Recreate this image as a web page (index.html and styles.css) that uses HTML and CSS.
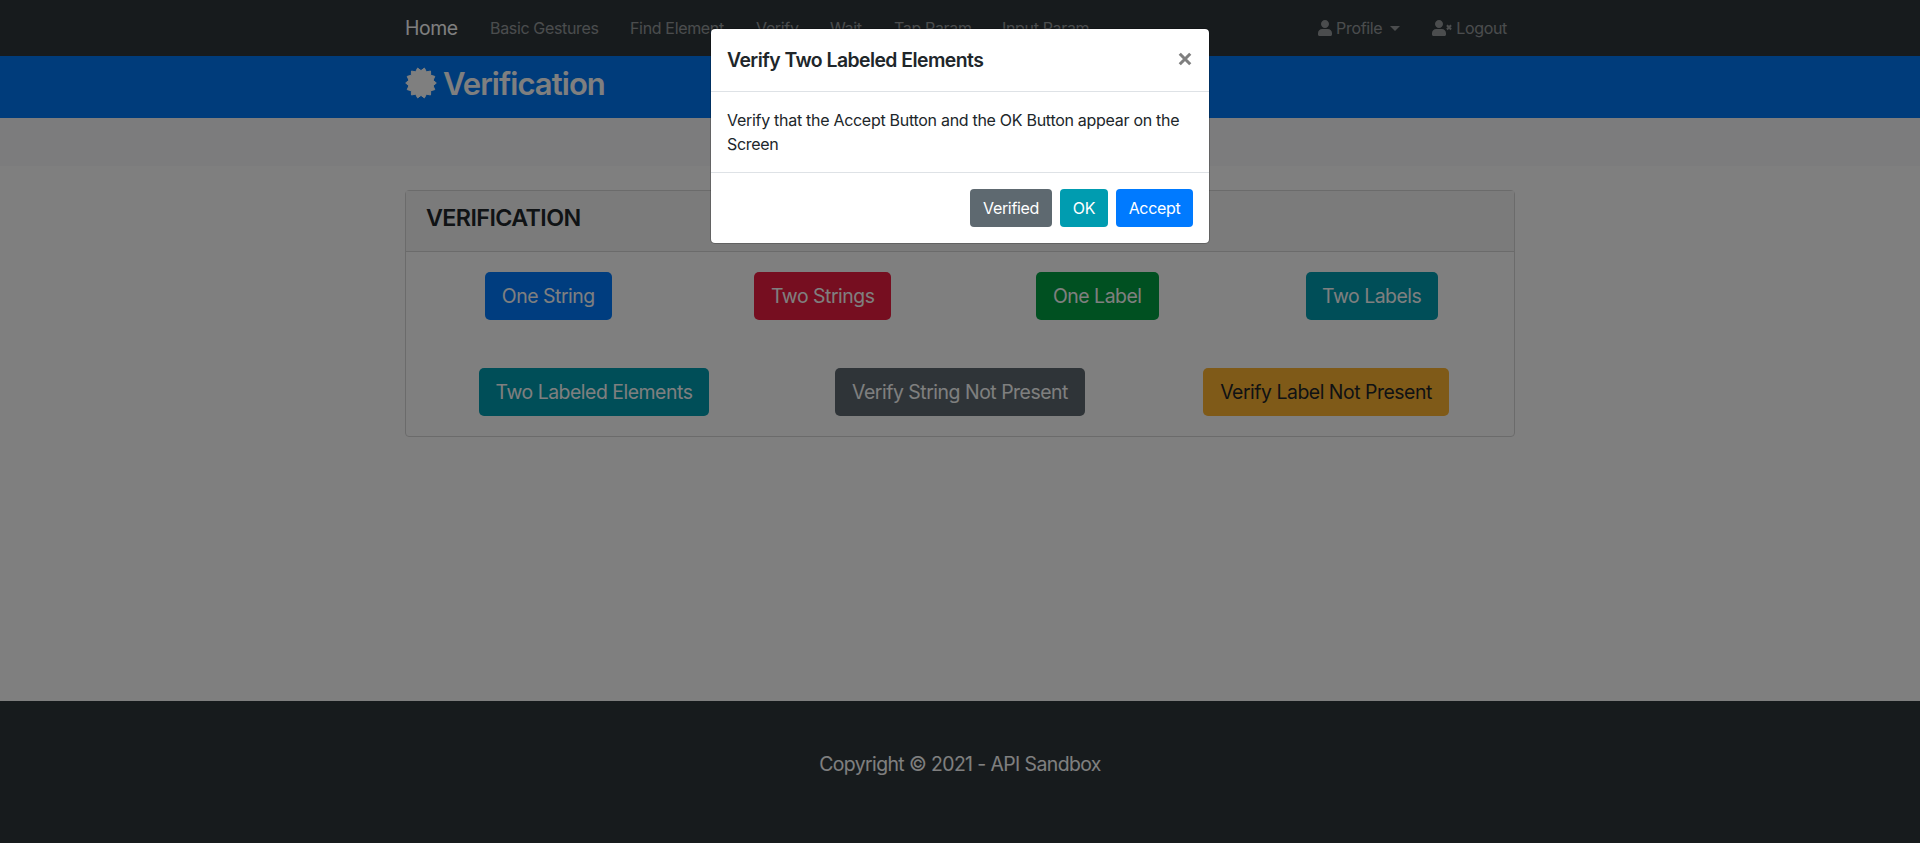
FILE: index.html
```html
<!DOCTYPE html>
<html lang="en">
<head>
<meta charset="utf-8">
<title>Verification</title>
<link rel="stylesheet" href="styles.css">
</head>
<body>
<nav class="navbar"><div class="container nav-inner">
  <a class="brand">Home</a>
  <a class="nav-link w-basic">Basic Gestures</a><a class="nav-link w-find">Find Element</a><a class="nav-link w-verify">Verify</a><a class="nav-link w-wait">Wait</a><a class="nav-link w-tap">Tap Param</a><a class="nav-link w-input">Input Param</a>
  <div class="nav-right">
    <a class="nav-link"><svg class="user" viewBox="0 0 448 512"><path d="M224 256c70.700 0 128-57.300 128-128S294.700 0 224 0 96 57.300 96 128s57.300 128 128 128zm90 32H134C60 288 0 348 0 422v42c0 26 22 48 48 48h352c26 0 48-22 48-48v-42c0-74-60-134-134-134z"/></svg><span>Profile</span><i class="caret"></i></a>
    <a class="nav-link"><svg class="user-x" viewBox="0 0 640 512"><path d="M224 256c70.700 0 128-57.300 128-128S294.700 0 224 0 96 57.300 96 128s57.300 128 128 128zm90 32H134C60 288 0 348 0 422v42c0 26 22 48 48 48h352c26 0 48-22 48-48v-42c0-74-60-134-134-134z"/><path class="cross" d="M478 170l132 132M610 170L478 302"/></svg><span>Logout</span></a>
  </div>
</div></nav>
<header class="page-header"><div class="container header-inner">
  <svg class="seal" viewBox="-16 -16 32 32"><path d="M0-12.400L3.410-14.920 5.380-11.170 9.540-11.960 9.690-7.730 13.790-6.640 12.090-2.760 15.300 0 12.090 2.760 13.790 6.640 9.690 7.730 9.540 11.960 5.380 11.170 3.410 14.920 0 12.400-3.410 14.920-5.380 11.170-9.540 11.960-9.690 7.730-13.790 6.640-12.090 2.760-15.300 0-12.090-2.760-13.790-6.640-9.690-7.730-9.540-11.960-5.380-11.170-3.410-14.920z"/></svg>
  <h1>Verification</h1>
</div></header>
<section class="actions"></section>
<main class="container">
  <section class="card">
    <div class="card-header"><h2>VERIFICATION</h2></div>
    <div class="card-body">
      <div class="row four">
        <button class="btn lg primary b1">One String</button><button class="btn lg danger b2">Two Strings</button><button class="btn lg success b3">One Label</button><button class="btn lg info b4">Two Labels</button>
      </div>
      <div class="row three">
        <button class="btn lg info b5">Two Labeled Elements</button><button class="btn lg secondary b6">Verify String Not Present</button><button class="btn lg warning b7">Verify Label Not Present</button>
      </div>
    </div>
  </section>
</main>
<footer class="footer"><p>Copyright © 2021 - API Sandbox</p></footer>
<div class="backdrop">
  <div class="modal">
    <div class="modal-header"><h3>Verify Two Labeled Elements</h3><svg class="close" viewBox="0 0 12 12"><path d="M1.500 1.500l9 9M10.500 1.500l-9 9"/></svg></div>
    <div class="modal-body">Verify that the Accept Button and the OK Button appear on the<br>Screen</div>
    <div class="modal-footer"><button class="btn secondary m1">Verified</button><button class="btn info m2">OK</button><button class="btn primary m3">Accept</button></div>
  </div>
</div>
</body>
</html>
```
FILE: styles.css
```css
* { box-sizing: border-box; }
body { margin: 0; height: 843px; overflow: hidden; display: flex; flex-direction: column; background: #fff; color: #20262a; font: 400 16px/24px Inter, "Liberation Sans", sans-serif; letter-spacing: -0.34px; }
h1, h2, h3, p { margin: 0; font-weight: 600; }
.container { width: 1110px; margin: 0 auto; }
.navbar { height: 56px; background: #2e363a; }
.nav-inner { height: 56px; display: flex; align-items: center; }
.brand { width: 85px; color: #fff; font-size: 19.4px; letter-spacing: -0.4px; }
.nav-link { display: flex; align-items: center; color: rgba(255,255,255,.5); white-space: nowrap; }
.w-basic { width: 140px; }
.w-find { width: 126px; }
.w-verify { width: 74px; }
.w-wait { width: 64px; }
.w-tap { width: 108px; }
.w-input { width: 90px; }
.nav-right { margin-left: auto; padding-right: 8px; display: flex; gap: 32px; }
.nav-right svg { fill: currentColor; margin-right: 4px; }
.user { width: 14px; height: 16px; }
.user-x { width: 20px; height: 16px; }
.cross { stroke: currentColor; stroke-width: 66; }
.caret { margin-left: 8px; border: 5px solid transparent; border-top-color: currentColor; border-bottom: 0; }
.page-header { height: 62px; background: #0078f6; color: #fff; }
.header-inner { display: flex; align-items: center; padding-top: 8px; gap: 7px; }
.seal { width: 32px; height: 32px; margin-right: -1px; fill: #fff; stroke: #fff; stroke-width: 1; stroke-linejoin: round; }
h1 { padding-top: 2px; font-size: 31px; line-height: 36px; letter-spacing: -0.95px; }
.actions { height: 48px; background: #f8f9fa; margin-bottom: 24px; }
.card { height: 247px; border: 1px solid #d6d6d6; border-radius: 4px; }
.card-header { height: 61px; padding: 12px 20px; background: #f7f7f7; border-bottom: 1px solid #d6d6d6; }
h2 { font-size: 23.3px; line-height: 29px; letter-spacing: -0.6px; }
.card-body { padding: 20px 5px; }
.row { display: grid; justify-items: center; }
.four { grid-template-columns: repeat(4, 1fr); margin-bottom: 48px; }
.three { grid-template-columns: repeat(3, 1fr); }
.btn { height: 38px; padding: 0; border: 0; border-radius: 4px; color: #fff; font: inherit; letter-spacing: inherit; white-space: nowrap; }
.lg { height: 48px; border-radius: 5px; font-size: 19.4px; letter-spacing: -0.46px; }
.primary { background: #007aff; }
.danger { background: #ec1c40; }
.success { background: #00a042; }
.info { background: #009cb0; }
.secondary { background: #5e6970; }
.warning { background: #ffb430; color: #212529; }
.b1 { width: 127px; }
.b2 { width: 137px; }
.b3 { width: 123px; }
.b4 { width: 132px; }
.b5 { width: 230px; }
.b6 { width: 250px; }
.b7 { width: 246px; }
.footer { margin-top: auto; height: 142px; padding-top: 48px; background: #2e363a; color: #fff; text-align: center; }
.footer p { font-size: 19.4px; line-height: 30px; font-weight: 400; letter-spacing: -0.58px; }
.backdrop { position: absolute; inset: 0; padding-top: 28px; background: rgba(0,0,0,.5); }
.modal { width: 500px; margin: 0 auto; background: #fff; background-clip: padding-box; border: 1px solid rgba(0,0,0,.2); border-radius: 5px; }
.modal-header { display: flex; justify-content: space-between; height: 63px; padding: 16px; border-bottom: 1px solid #dee2e6; }
h3 { font-size: 19.4px; line-height: 30px; letter-spacing: -0.55px; }
.close { width: 14px; height: 14px; margin: 7px 1px 0 0; fill: none; stroke: #7f7f7f; stroke-width: 2.600; }
.modal-body { padding: 16px; white-space: nowrap; letter-spacing: -0.29px; }
.modal-footer { height: 71px; border-top: 1px solid #dee2e6; padding: 16px; display: flex; justify-content: flex-end; gap: 8px; }
.m1 { width: 82px; }
.m2 { width: 48px; }
.m3 { width: 77px; }
```
